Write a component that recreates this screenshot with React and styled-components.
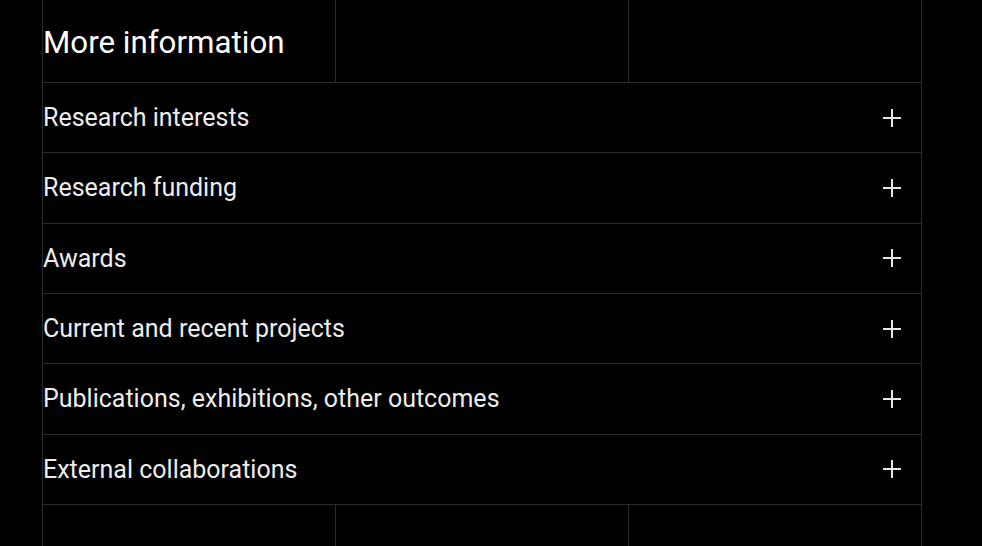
import React from "react";
import styled, { createGlobalStyle } from "styled-components";

const items = [
  "Research interests",
  "Research funding",
  "Awards",
  "Current and recent projects",
  "Publications, exhibitions, other outcomes",
  "External collaborations",
];

const Plus = () => (
  <svg width="18" height="18" viewBox="0 0 18 18">
    <path d="M9 0v18M0 9h18" stroke="#e6e6e6" strokeWidth="2" fill="none" />
  </svg>
);

const App = () => {
  return (
    <>
      <GlobalStyle />
      <Page>
        <Panel>
          <Cells>
            <Cell>
              <Title>More information</Title>
            </Cell>
            <Cell />
            <Cell />
          </Cells>
          {items.map((label) => (
            <Row key={label}>
              <Label>{label}</Label>
              <Plus />
            </Row>
          ))}
          <Cells $short>
            <Cell />
            <Cell />
            <Cell />
          </Cells>
        </Panel>
      </Page>
    </>
  );
};

export default App;

const GlobalStyle = createGlobalStyle`
  body {
    margin: 0;
    background: #000;
    font-family: Roboto, "Liberation Sans", sans-serif;
    color: #f2f2f2;
  }
`;

const Page = styled.div`
  height: 546px;
  overflow: hidden;
  padding-left: 42px;
`;

const Panel = styled.div`
  width: 880px;
  border-left: 1px solid #2b2b2b;
  border-right: 1px solid #2b2b2b;
  box-sizing: border-box;
`;

const Cells = styled.div`
  display: grid;
  grid-template-columns: 293px 293px 1fr;
  box-sizing: border-box;
  height: ${(p) => (p.$short ? "60px" : "83px")};
  border-bottom: ${(p) => (p.$short ? "none" : "1px solid #2b2b2b")};
`;

const Cell = styled.div`
  display: flex;
  align-items: center;
  border-right: 1px solid #2b2b2b;
  &:last-child {
    border-right: none;
  }
`;

const Title = styled.h2`
  margin: 2px 0 0 0;
  font-size: 31.3px;
  font-weight: 400;
  color: #fff;
`;

const Row = styled.div`
  box-sizing: border-box;
  height: 70.33px;
  display: flex;
  align-items: center;
  justify-content: space-between;
  padding: 0 20px 0 0;
  border-bottom: 1px solid #2b2b2b;
`;

const Label = styled.span`
  font-size: 25px;
  color: #ececec;
`;
